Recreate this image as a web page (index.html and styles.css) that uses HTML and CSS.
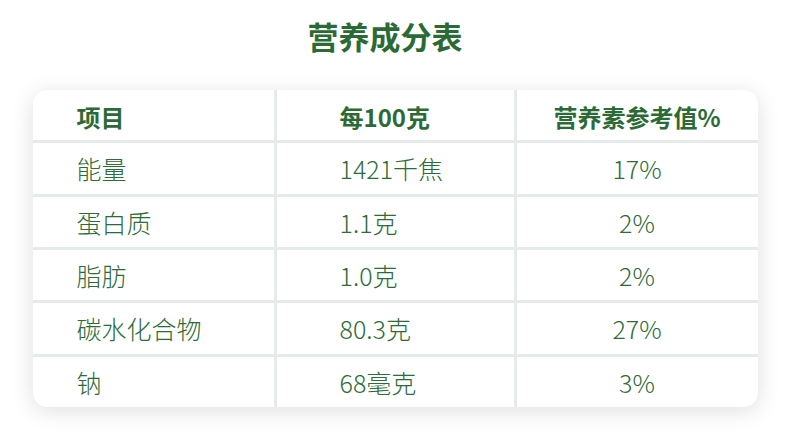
FILE: index.html
```html
<!DOCTYPE html>
<html lang="zh">
<head>
<meta charset="utf-8">
<link rel="stylesheet" href="styles.css">
</head>
<body>
<div class="page">
  <h1 class="title">营养成分表</h1>
  <div class="card">
    <div class="cell head c1">项目</div>
    <div class="cell head c2">每100克</div>
    <div class="cell head c3">营养素参考值%</div>

    <div class="cell c1">能量</div>
    <div class="cell c2">1421千焦</div>
    <div class="cell c3">17%</div>

    <div class="cell c1">蛋白质</div>
    <div class="cell c2">1.1克</div>
    <div class="cell c3">2%</div>

    <div class="cell c1">脂肪</div>
    <div class="cell c2">1.0克</div>
    <div class="cell c3">2%</div>

    <div class="cell c1">碳水化合物</div>
    <div class="cell c2">80.3克</div>
    <div class="cell c3">27%</div>

    <div class="cell c1">钠</div>
    <div class="cell c2">68毫克</div>
    <div class="cell c3">3%</div>
  </div>
</div>
</body>
</html>
```

FILE: styles.css
```css
html, body {
  margin: 0;
  padding: 0;
  background: #ffffff;
}
body {
  font-family: "Noto Sans CJK SC", "Noto Sans", sans-serif;
  color: #2e6b37;
}
.page {
  width: 790px;
  height: 442px;
  display: flex;
  flex-direction: column;
  align-items: center;
  padding-top: 13px;
  box-sizing: border-box;
}
.title {
  margin: 0;
  padding-right: 20px;
  font-size: 31px;
  line-height: 46px;
  font-weight: 700;
  color: #2b6a35;
}
.card {
  margin-top: 31px;
  width: 725px;
  height: 317px;
  display: grid;
  grid-template-columns: 241px 237px 241px;
  grid-template-rows: repeat(6, 1fr);
  gap: 3px;
  background: #e4ebe8;
  border-radius: 14px;
  overflow: hidden;
  box-shadow: 0 4px 22px rgba(0, 0, 0, 0.13);
}
.cell {
  background: #ffffff;
  display: flex;
  align-items: center;
  font-size: 25px;
  font-weight: 300;
  color: #2d6b37;
}
.head {
  font-size: 24px;
  font-weight: 700;
  color: #2b6a35;
  padding-top: 2px;
}
.c1 {
  padding-left: 44px;
}
.c2 {
  padding-left: 63px;
}
.c3 {
  justify-content: center;
}
```
